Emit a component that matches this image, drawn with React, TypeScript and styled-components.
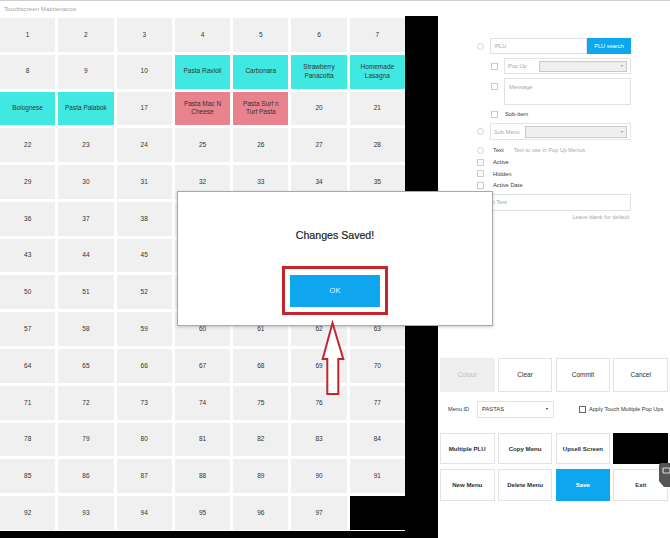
import React from "react";
import styled, { createGlobalStyle } from "styled-components";

const GlobalStyle = createGlobalStyle`
  html, body { margin: 0; padding: 0; background: #fff; }
  body { font-family: "Liberation Sans", Arial, sans-serif; }
  #root { width: 670px; height: 538px; overflow: hidden; }
`;

type Tone = "plain" | "cyan" | "pink";

const toneColors: Record<Tone, string> = {
  plain: "#f0f0f0",
  cyan: "#40e8e2",
  pink: "#e8838e",
};

const namedKeys: Record<number, { label: string; tone: Tone }> = {
  11: { label: "Pasta Ravioli", tone: "cyan" },
  12: { label: "Carbonara", tone: "cyan" },
  13: { label: "Strawberry Panacotta", tone: "cyan" },
  14: { label: "Homemade Lasagna", tone: "cyan" },
  15: { label: "Bolognese", tone: "cyan" },
  16: { label: "Pasta Palabok", tone: "cyan" },
  18: { label: "Pasta Mac N Cheese", tone: "pink" },
  19: { label: "Pasta Surf n Turf Pasta", tone: "pink" },
};

const keys = Array.from({ length: 97 }, (_, i) => {
  const n = i + 1;
  const named = namedKeys[n];
  return named ? { id: n, label: named.label, tone: named.tone } : { id: n, label: String(n), tone: "plain" as Tone };
});

/* ---------- page frame ---------- */

const Screen = styled.div`
  position: relative;
  width: 670px;
  height: 538px;
  display: flex;
  flex-direction: column;
  overflow: hidden;
  background: #fff;
  font-family: "Liberation Sans", Arial, sans-serif;
`;

const TitleBar = styled.div`
  height: 16px;
  box-sizing: border-box;
  border-top: 1px solid #cfcfcf;
  display: flex;
  align-items: center;
  padding: 0 0 1px 4px;
  font-size: 6.2px;
  color: #a3a3a3;
`;

const Workspace = styled.div`
  flex: 1;
  display: flex;
  min-height: 0;
`;

/* ---------- key layout board ---------- */

const Board = styled.div`
  width: 438px;
  background: #000;
  display: flex;
  align-items: flex-start;
`;

const KeyGrid = styled.div`
  width: 405px;
  height: 515px;
  box-sizing: border-box;
  padding: 2px 0 1px;
  background: #fff;
  display: grid;
  grid-template-columns: repeat(7, 1fr);
  grid-template-rows: repeat(14, 1fr);
  gap: 3px;
`;

const Key = styled.div<{ $tone: Tone }>`
  background: ${(p) => toneColors[p.$tone]};
  display: flex;
  align-items: center;
  justify-content: center;
  text-align: center;
  padding: 0 5px;
  font-size: 6.5px;
  line-height: 1.3;
  color: #333;
`;

const EmptySlot = styled.div`
  background: #000;
`;

/* ---------- settings panel ---------- */

const Panel = styled.div`
  flex: 1;
  position: relative;
  display: flex;
  flex-direction: column;
  background: #fff;
`;

const Form = styled.div`
  margin: 22px 0 0 38px;
  width: 155px;
  display: flex;
  flex-direction: column;
`;

const Line = styled.div<{ $top?: number; $h: number; $indent?: boolean; $alignTop?: boolean }>`
  margin-top: ${(p) => p.$top ?? 0}px;
  margin-left: ${(p) => (p.$indent ? 14 : 0)}px;
  height: ${(p) => p.$h}px;
  display: grid;
  grid-template-columns: 14px 1fr;
  align-items: ${(p) => (p.$alignTop ? "start" : "center")};
`;

const Radio = styled.span`
  width: 7px;
  height: 7px;
  box-sizing: border-box;
  border: 1px solid #d2d2d2;
  border-radius: 50%;
  margin-left: 0.5px;
`;

const Check = styled.span<{ $top?: number; $strong?: boolean }>`
  width: 7px;
  height: 7px;
  box-sizing: border-box;
  border: 1px solid ${(p) => (p.$strong ? "#666" : "#cbcbcb")};
  background: #fff;
  margin-top: ${(p) => p.$top ?? 0}px;
  margin-left: 0.5px;
`;

const InputGroup = styled.div`
  display: flex;
  height: 100%;
`;

const TextField = styled.div<{ $pad?: number }>`
  flex: 1;
  box-sizing: border-box;
  border: 1px solid #e2e2e2;
  display: flex;
  align-items: center;
  padding-left: ${(p) => p.$pad ?? 4}px;
  font-size: 5.8px;
  color: #a5a5a5;
  height: 100%;
`;

const SearchButton = styled.div`
  width: 44px;
  background: #0ea6ee;
  color: #fff;
  font-size: 5.7px;
  display: flex;
  align-items: center;
  justify-content: center;
`;

const FieldBox = styled.div`
  height: 100%;
  box-sizing: border-box;
  border: 1px solid #e4e4e4;
  display: flex;
  align-items: center;
  padding: 0 3px 0 3px;
`;

const FieldLabel = styled.span`
  width: 31px;
  flex-shrink: 0;
  font-size: 5.6px;
  color: #a8a8a8;
`;

const Dropdown = styled.div<{ $h: number }>`
  flex: 1;
  height: ${(p) => p.$h}px;
  box-sizing: border-box;
  background: #efefef;
  border: 1px solid #c9c9c9;
  display: flex;
  align-items: center;
  justify-content: flex-end;
  padding-right: 3px;
  &::after {
    content: "";
    border-left: 1.5px solid transparent;
    border-right: 1.5px solid transparent;
    border-top: 2px solid #888;
  }
`;

const MessageBox = styled.div`
  height: 100%;
  box-sizing: border-box;
  border: 1px solid #e2e2e2;
  padding: 4px 0 0 4px;
  font-size: 5.8px;
  line-height: 8px;
  color: #a8a8a8;
`;

const OptionText = styled.span<{ $pad?: number }>`
  font-size: 5.8px;
  color: #3a3a3a;
  padding-left: ${(p) => p.$pad ?? 0}px;
  white-space: nowrap;
`;

const OptionGroup = styled.div`
  display: flex;
  align-items: center;
  gap: 10px;
`;

const Hint = styled.span`
  font-size: 5.6px;
  color: #a9a9a9;
  white-space: nowrap;
`;

const HintLine = styled.div`
  margin-top: 2px;
  height: 8px;
  display: flex;
  align-items: center;
  justify-content: flex-end;
  padding-right: 2px;
`;

const FullField = styled.div`
  margin-top: 3.5px;
  height: 16.4px;
  display: flex;
`;

/* ---------- command buttons ---------- */

const ActionGrid = styled.div<{ $top: number; $row: number; $gap: number }>`
  margin: ${(p) => p.$top}px 0 0 2px;
  width: 228px;
  display: grid;
  grid-template-columns: repeat(4, 1fr);
  grid-auto-rows: ${(p) => p.$row}px;
  column-gap: 3.3px;
  row-gap: ${(p) => p.$gap}px;
`;

type Variant = "default" | "muted" | "primary" | "dark";

const ActionButton = styled.div<{ $variant?: Variant; $bold?: boolean }>`
  box-sizing: border-box;
  display: flex;
  align-items: center;
  justify-content: center;
  text-align: center;
  font-size: ${(p) => (p.$bold ? 6.1 : 6.5)}px;
  font-weight: ${(p) => (p.$bold ? 700 : 400)};
  border: 1px solid
    ${(p) => (p.$variant === "muted" || p.$variant === "primary" ? "transparent" : p.$variant === "dark" ? "#000" : "#e3e3e3")};
  background: ${(p) =>
    p.$variant === "muted" ? "#efefef" : p.$variant === "primary" ? "#0ea6ee" : p.$variant === "dark" ? "#000" : "#fff"};
  color: ${(p) => (p.$variant === "muted" ? "#bdbdbd" : p.$variant === "primary" ? "#fff" : "#2e2e2e")};
`;

const MenuRow = styled.div`
  margin-top: 9px;
  height: 17px;
  display: flex;
  align-items: center;
  padding-left: 10px;
`;

const MenuLabel = styled.span`
  width: 29px;
  font-size: 5.6px;
  color: #333;
`;

const MenuSelect = styled.div`
  width: 77px;
  height: 17px;
  box-sizing: border-box;
  border: 1px solid #e4e4e4;
  display: flex;
  align-items: center;
  justify-content: space-between;
  padding: 0 5px 0 4px;
  font-size: 5.8px;
  color: #333;
  &::after {
    content: "";
    border-left: 1.8px solid transparent;
    border-right: 1.8px solid transparent;
    border-top: 2.5px solid #222;
  }
`;

const ApplyOption = styled.label`
  margin-left: 24px;
  display: flex;
  align-items: center;
  gap: 3.5px;
  font-size: 5.6px;
  color: #333;
  white-space: nowrap;
`;

const SideTab = styled.div`
  position: absolute;
  right: 0;
  top: 447px;
  width: 11px;
  height: 24px;
  background: #555;
  border-radius: 3px 0 0 0;
  clip-path: polygon(0 0, 100% 0, 100% 100%, 45% 100%, 0 75%);
  display: flex;
  justify-content: flex-end;
  padding-top: 4px;
  box-sizing: border-box;
`;

/* ---------- confirmation dialog ---------- */

const Dialog = styled.div`
  position: absolute;
  left: 177px;
  top: 191px;
  width: 316px;
  height: 135px;
  box-sizing: border-box;
  background: #fff;
  border: 1px solid #a9a9a9;
  box-shadow: 0 1px 3px rgba(0, 0, 0, 0.2);
  display: flex;
  flex-direction: column;
  align-items: center;
  padding-top: 36px;
`;

const DialogMessage = styled.div`
  font-size: 10.6px;
  line-height: 14px;
  color: #1c1c1c;
  -webkit-text-stroke: 0.2px #1c1c1c;
`;

const Highlight = styled.div`
  margin-top: 24px;
  width: 106px;
  height: 49px;
  box-sizing: border-box;
  border: 3px solid #c4262e;
  display: flex;
  align-items: center;
  justify-content: center;
`;

const OkButton = styled.div`
  width: 90px;
  height: 32px;
  background: #0ea6ee;
  color: #e8f7ff;
  font-size: 7.5px;
  display: flex;
  align-items: center;
  justify-content: center;
`;

const Pointer = styled.svg`
  position: absolute;
  left: 320px;
  top: 320px;
`;

export default function App() {
  return (
    <>
      <GlobalStyle />
      <Screen>
        <TitleBar>Touchscreen Maintenance</TitleBar>
        <Workspace>
          <Board>
            <KeyGrid>
              {keys.map((k) => (
                <Key key={k.id} $tone={k.tone}>
                  {k.label}
                </Key>
              ))}
              <EmptySlot />
            </KeyGrid>
          </Board>

          <Panel>
            <Form>
              <Line $h={16}>
                <Radio />
                <InputGroup>
                  <TextField>PLU</TextField>
                  <SearchButton>PLU search</SearchButton>
                </InputGroup>
              </Line>

              <Line $top={4} $h={16} $indent>
                <Check />
                <FieldBox>
                  <FieldLabel>Pop Up</FieldLabel>
                  <Dropdown $h={11} />
                </FieldBox>
              </Line>

              <Line $top={4} $h={27} $indent $alignTop>
                <Check $top={5} />
                <MessageBox>Message</MessageBox>
              </Line>

              <Line $top={5} $h={8} $indent>
                <Check />
                <OptionText $pad={1}>Sub-item</OptionText>
              </Line>

              <Line $top={5.3} $h={17}>
                <Radio />
                <FieldBox>
                  <FieldLabel>Sub Menu</FieldLabel>
                  <Dropdown $h={11.5} />
                </FieldBox>
              </Line>

              <Line $top={4} $h={12}>
                <Radio />
                <OptionGroup>
                  <OptionText $pad={3}>Text</OptionText>
                  <Hint>Text to use in Pop Up Menus</Hint>
                </OptionGroup>
              </Line>

              {["Active", "Hidden", "Active Date"].map((label) => (
                <Line key={label} $h={11.5}>
                  <Check />
                  <OptionText $pad={3}>{label}</OptionText>
                </Line>
              ))}

              <FullField>
                <TextField $pad={1}>Button Text</TextField>
              </FullField>
              <HintLine>
                <Hint>Leave blank for default</Hint>
              </HintLine>
            </Form>

            <ActionGrid $top={137.6} $row={33.4} $gap={0}>
              <ActionButton $variant="muted">Colour</ActionButton>
              <ActionButton>Clear</ActionButton>
              <ActionButton>Commit</ActionButton>
              <ActionButton>Cancel</ActionButton>
            </ActionGrid>

            <MenuRow>
              <MenuLabel>Menu ID</MenuLabel>
              <MenuSelect>PASTAS</MenuSelect>
              <ApplyOption>
                <Check $strong />
                Apply Touch Multiple Pop Ups
              </ApplyOption>
            </MenuRow>

            <ActionGrid $top={15} $row={31.6} $gap={4.7}>
              <ActionButton $bold>Multiple PLU</ActionButton>
              <ActionButton $bold>Copy Menu</ActionButton>
              <ActionButton $bold>Upsell Screen</ActionButton>
              <ActionButton $variant="dark" />
              <ActionButton $bold>New Menu</ActionButton>
              <ActionButton $bold>Delete Menu</ActionButton>
              <ActionButton $bold $variant="primary">
                Save
              </ActionButton>
              <ActionButton $bold>Exit</ActionButton>
            </ActionGrid>

            <SideTab>
              <svg width="8" height="7" viewBox="0 0 8 7">
                <rect x="1" y="1" width="7" height="5" rx="1" fill="none" stroke="#d8d8d8" strokeWidth="1.2" />
              </svg>
            </SideTab>
          </Panel>
        </Workspace>

        <Dialog>
          <DialogMessage>Changes Saved!</DialogMessage>
          <Highlight>
            <OkButton>OK</OkButton>
          </Highlight>
        </Dialog>

        <Pointer width="26" height="76" viewBox="0 0 26 76">
          <polygon
            points="12.5,3 23.3,39 18.3,39 18.3,74 7.3,74 7.3,39 2.7,39"
            fill="#fff"
            stroke="#c4262e"
            strokeWidth="2"
            strokeLinejoin="miter"
          />
        </Pointer>
      </Screen>
    </>
  );
}
